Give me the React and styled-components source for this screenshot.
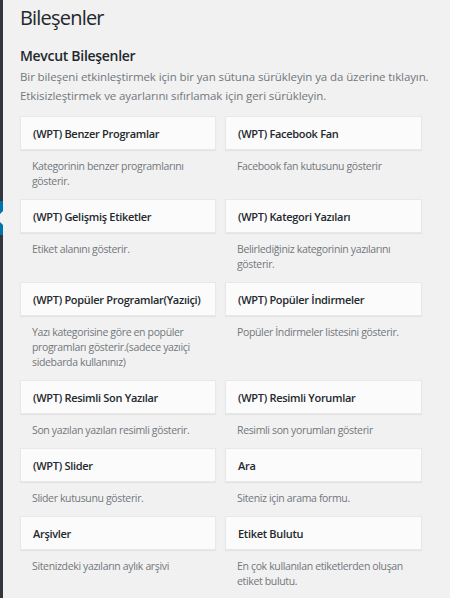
import React from "react";
import styled, { createGlobalStyle } from "styled-components";

const GlobalStyle = createGlobalStyle`
  html, body {
    margin: 0;
    padding: 0;
    background: #f1f1f1;
  }
  body {
    font-family: "Open Sans", "Noto Sans", sans-serif;
    color: #23282d;
  }
`;

const Page = styled.div`
  display: flex;
  height: 598px;
  overflow: hidden;
`;

const AdminMenu = styled.div`
  width: 3px;
  flex-shrink: 0;
  background: #32373c;
  padding-top: 201px;
`;

const ActiveItem = styled.div`
  position: relative;
  height: 34px;
  background: #0073aa;
  &::after {
    content: "";
    position: absolute;
    right: 0;
    top: 10px;
    border: 7px solid transparent;
    border-right-color: #f1f1f1;
    border-left-width: 3px;
  }
`;

const Content = styled.div`
  flex: 1;
  padding: 0 0 0 17px;
`;

const PageTitle = styled.h1`
  margin: 0;
  padding-top: 4px;
  font-size: 20px;
  font-weight: 400;
  line-height: 28px;
  letter-spacing: -0.8px;
`;

const SectionTitle = styled.h2`
  margin: 14px 0 0;
  font-size: 14px;
  font-weight: 600;
  line-height: 20px;
  letter-spacing: -0.3px;
`;

const Intro = styled.p`
  margin: 1px 0 0;
  font-size: 11.5px;
  line-height: 19px;
  color: #72777c;
  letter-spacing: -0.1px;
`;

const WidgetGrid = styled.div`
  display: grid;
  grid-template-columns: 196px 197px;
  column-gap: 9px;
  margin-top: 11px;
`;

const WidgetItem = styled.div`
  display: flex;
  flex-direction: column;
`;

const WidgetCard = styled.div`
  height: 34px;
  display: flex;
  align-items: center;
  padding: 0 12px;
  background: #fbfbfb;
  border: 1px solid #e8e8e8;
  box-shadow: 0 1px 1px rgba(0, 0, 0, 0.05);
  box-sizing: border-box;
  font-size: 11px;
  font-weight: 600;
  color: #23282d;
  letter-spacing: -0.3px;
  white-space: nowrap;
`;

const WidgetDescription = styled.div`
  padding: 9px 10px 10px 12px;
  font-size: 10.5px;
  line-height: 15px;
  color: #72777c;
  letter-spacing: -0.35px;
`;

const widgets = [
  ["(WPT) Benzer Programlar", "Kategorinin benzer programlarını gösterir."],
  ["(WPT) Facebook Fan", "Facebook fan kutusunu gösterir"],
  ["(WPT) Gelişmiş Etiketler", "Etiket alanını gösterir."],
  ["(WPT) Kategori Yazıları", "Belirlediğiniz kategorinin yazılarını gösterir."],
  [
    "(WPT) Popüler Programlar(Yazıiçi)",
    "Yazı kategorisine göre en popüler programları gösterir.(sadece yazıiçi sidebarda kullanınız)",
  ],
  ["(WPT) Popüler İndirmeler", "Popüler İndirmeler listesini gösterir."],
  ["(WPT) Resimli Son Yazılar", "Son yazılan yazıları resimli gösterir."],
  ["(WPT) Resimli Yorumlar", "Resimli son yorumları gösterir"],
  ["(WPT) Slider", "Slider kutusunu gösterir."],
  ["Ara", "Siteniz için arama formu."],
  ["Arşivler", "Sitenizdeki yazıların aylık arşivi"],
  ["Etiket Bulutu", "En çok kullanılan etiketlerden oluşan etiket bulutu."],
  ["Kategoriler", "Kategorilerin listesi ya da açılır menüsü."],
  ["Menü", "Kenar çubuğunuza özel bir menü ekleyin."],
];

export default function App() {
  return (
    <>
      <GlobalStyle />
      <Page>
        <AdminMenu>
          <ActiveItem />
        </AdminMenu>
        <Content>
          <PageTitle>Bileşenler</PageTitle>
          <SectionTitle>Mevcut Bileşenler</SectionTitle>
          <Intro>
            Bir bileşeni etkinleştirmek için bir yan sütuna sürükleyin ya da üzerine tıklayın.
            <br />
            Etkisizleştirmek ve ayarlarını sıfırlamak için geri sürükleyin.
          </Intro>
          <WidgetGrid>
            {widgets.map(([title, desc]) => (
              <WidgetItem key={title}>
                <WidgetCard>{title}</WidgetCard>
                <WidgetDescription>{desc}</WidgetDescription>
              </WidgetItem>
            ))}
          </WidgetGrid>
        </Content>
      </Page>
    </>
  );
}
